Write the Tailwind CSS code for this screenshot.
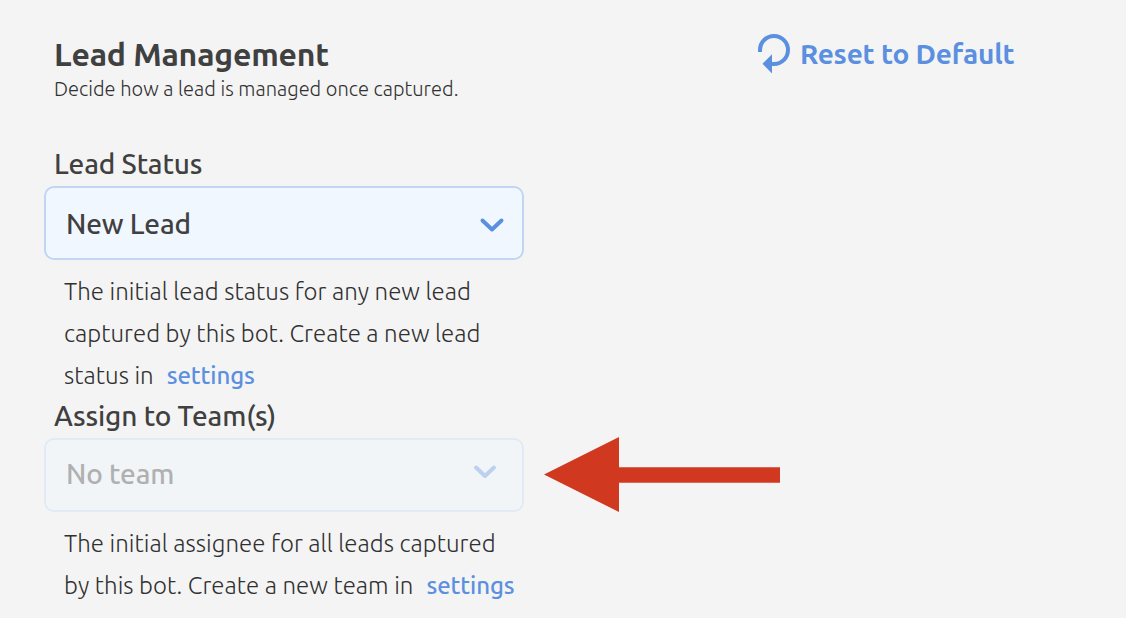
<!doctype html>
<html lang="en">

<head>
    <meta charset="UTF-8">
    <meta name="viewport" content="width=device-width, initial-scale=1.0">
    <title>Lead Management</title>
    <script src="https://cdn.jsdelivr.net/npm/@tailwindcss/browser@4"></script>
</head>

<body class="bg-[#f4f4f4] text-[#404040] font-['Ubuntu','Noto_Sans',sans-serif] overflow-hidden">

    <main class="relative w-[1126px] h-[618px] pl-11 pt-[34px] whitespace-nowrap">

        <header class="flex items-start h-[110px]">
            <div class="w-[713px] pl-2.5">
                <h1 class="text-[32px] leading-[41px] font-semibold tracking-[-0.2px]">Lead Management</h1>
                <p class="text-[20px] leading-7 font-light tracking-[0.03px] text-[#303030]">Decide how a lead is managed once captured.</p>
            </div>
            <button class="flex items-center gap-2.5 pl-px text-[#5b8fdf]">
                <svg class="w-[33px] h-10" viewBox="0 0 33 40" fill="none">
                    <path d="M2 18V15.9A14 14 0 1 1 16 30H12" stroke="currentColor" stroke-width="4" />
                    <path d="M4.5 29.7L14 20.3V39.5Z" fill="currentColor" />
                </svg>
                <span class="-ml-px text-[28px] leading-10 font-semibold tracking-[-0.17px]">Reset to Default</span>
            </button>
        </header>

        <!-- Lead status -->
        <section class="w-[480px]">
            <h2 class="h-[42px] pl-2.5 text-[28px] leading-10 font-medium tracking-[-0.14px]">Lead Status</h2>
            <div class="flex items-center justify-between h-[74px] pl-5 pr-[17px] rounded-[10px] border-2 border-[#c1d6f3] bg-[#f0f7ff]">
                <span class="text-[28px] leading-10 pt-px font-medium tracking-[-0.17px]">New Lead</span>
                <svg class="w-[26px] h-4 mt-[3px] text-[#5b8fdf]" viewBox="0 0 26 16" fill="none" stroke="currentColor" stroke-width="4" stroke-linecap="round" stroke-linejoin="round">
                    <path d="M3.5 3.5L13 12.5L22.5 3.5" />
                </svg>
            </div>
            <p class="h-[136px] pt-[11px] pl-5 text-[24px] leading-[42px] font-light tracking-[0.04px] text-[#303030]">
                <span>The initial lead status for any new lead</span><br>
                <span>captured by this bot. Create a new lead</span><br>
                <span>status in</span><a class="ml-[13px] font-medium tracking-[-0.1px] text-[#5b8fdf]">settings</a>
            </p>
        </section>

        <!-- Team assignment -->
        <section class="w-[480px]">
            <h2 class="h-[42px] pl-2.5 text-[28px] leading-10 font-medium tracking-[-0.14px]">Assign to Team(s)</h2>
            <div class="flex items-center justify-between h-[74px] pl-5 pr-6 rounded-[10px] border-2 border-[#e1eaf5] bg-[#f1f5f8]">
                <span class="text-[28px] leading-10 pb-[3px] font-medium tracking-[-0.17px] text-[#b0b0b0]">No team</span>
                <svg class="w-[26px] h-4 mb-[7px] text-[#bcd0ef]" viewBox="0 0 26 16" fill="none" stroke="currentColor" stroke-width="4" stroke-linecap="round" stroke-linejoin="round">
                    <path d="M4 3.5L13 12L22 3.5" />
                </svg>
            </div>
            <p class="pt-[11px] pl-5 text-[24px] leading-[42px] font-light tracking-[0.04px] text-[#303030]">
                <span>The initial assignee for all leads captured</span><br>
                <span>by this bot. Create a new team in</span><a class="ml-[13px] font-medium tracking-[-0.1px] text-[#5b8fdf]">settings</a>
            </p>
        </section>

        <!-- Arrow pointing at the team select -->
        <svg class="absolute left-[544px] top-[437px] w-[236px] h-[75px]" viewBox="0 0 236 75" fill="#d13820">
            <path d="M0 37.5L75 0V30.3H236V45.7H75V75Z" />
        </svg>
    </main>

</body>

</html>
